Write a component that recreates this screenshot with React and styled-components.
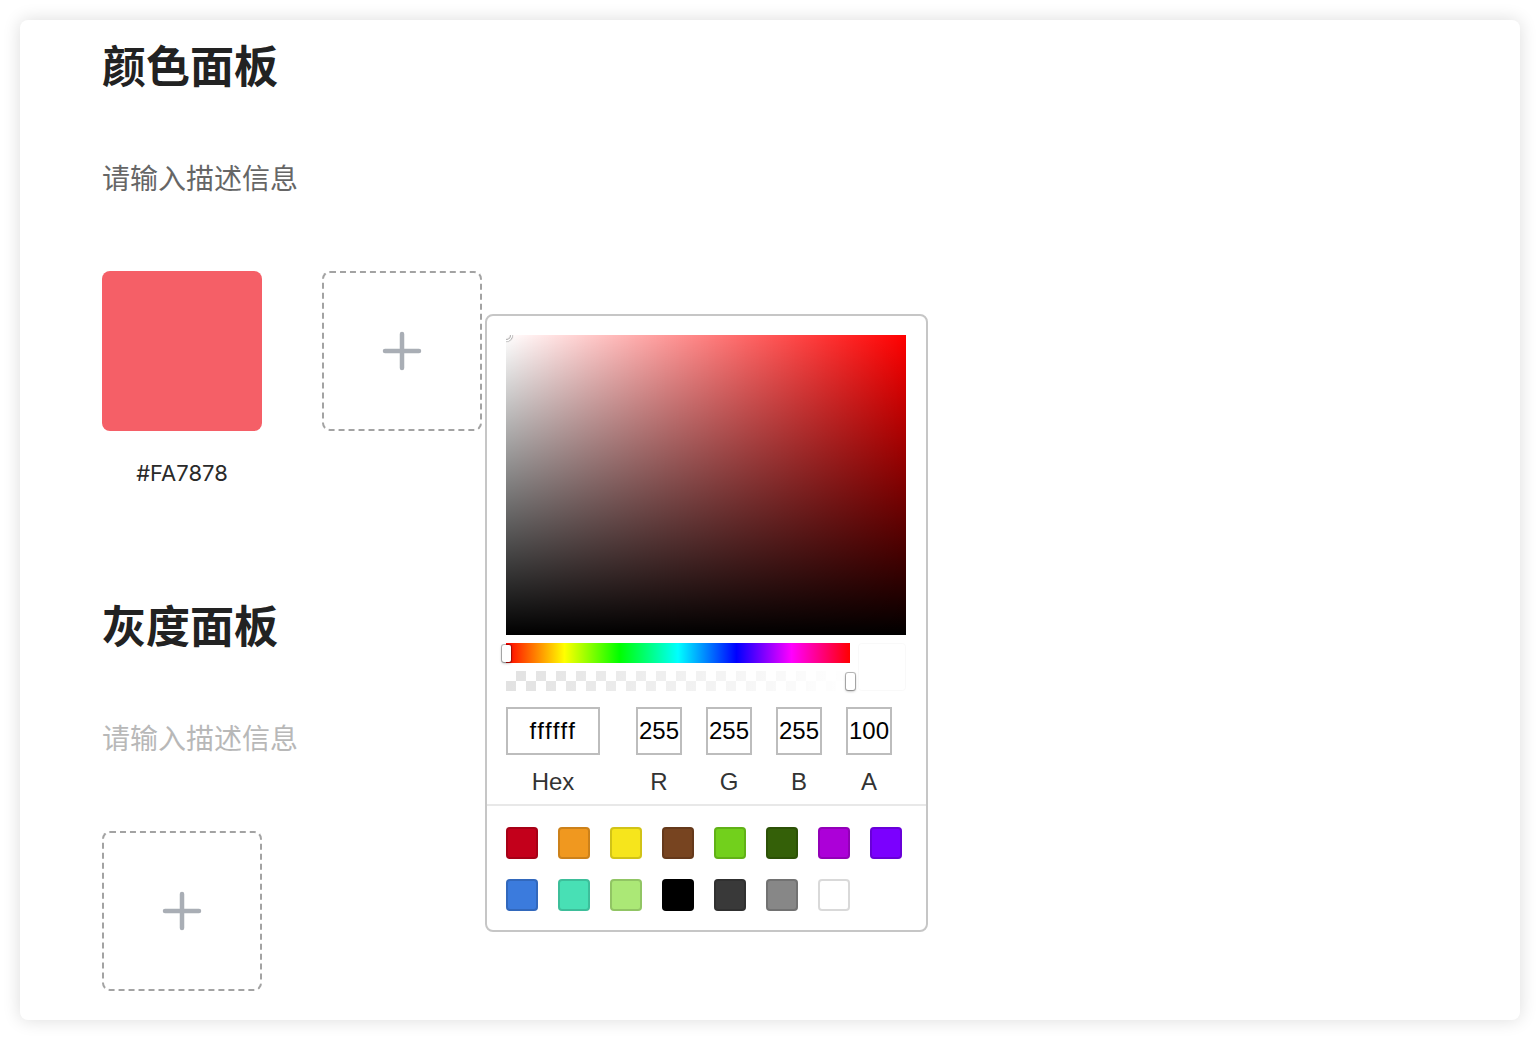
import React from 'react';
import styled, { createGlobalStyle } from 'styled-components';

const GlobalStyle = createGlobalStyle`
  body {
    margin: 0;
    padding: 20px;
    background: #fff;
    font-family: "Noto Sans CJK SC", "Noto Sans", sans-serif;
  }
  * { box-sizing: border-box; }
`;

const Card = styled.div`
  position: relative;
  height: 1000px;
  padding: 11px 80px 29px 82px;
  background: #fff;
  border-radius: 8px;
  box-shadow: 0 0 18px rgba(0, 0, 0, 0.14);
`;

const Section = styled.section`
  & + & {
    margin-top: 102px;
  }
`;

const Title = styled.h2`
  margin: 0;
  font-size: 44px;
  line-height: 66px;
  font-weight: 700;
  color: #222;
`;

const Desc = styled.p`
  margin: 59px 0 0;
  font-size: 28px;
  line-height: 42px;
  font-weight: 400;
  color: ${(p) => (p.$muted ? '#b8b8b8' : '#666')};
`;

const TileRow = styled.div`
  display: flex;
  gap: 60px;
  margin-top: 73px;
  align-items: flex-start;
`;

const SwatchItem = styled.div`
  display: flex;
  flex-direction: column;
  align-items: center;
  width: 160px;
`;

const Swatch = styled.div`
  width: 160px;
  height: 160px;
  border-radius: 8px;
  background: ${(p) => p.$color};
`;

const SwatchLabel = styled.div`
  margin-top: 26px;
  font-family: Inter, "Noto Sans", sans-serif;
  font-size: 22px;
  line-height: 32px;
  color: #2a2a2a;
`;

const AddTile = styled.div`
  position: relative;
  width: 160px;
  height: 160px;
  border: 2px dashed #a3a3a3;
  border-radius: 8px;
  display: flex;
  align-items: center;
  justify-content: center;
`;

const Popover = styled.div`
  position: absolute;
  left: calc(100% + 5px);
  top: 41px;
  z-index: 10;
  width: 443px;
  padding: 19px 20px 19px 19px;
  background: #fff;
  border: 2px solid #c6c6c6;
  border-radius: 8px;
  font-family: "Liberation Sans", Arial, sans-serif;
`;

const Saturation = styled.div`
  position: relative;
  width: 400px;
  height: 300px;
  overflow: hidden;
  background:
    linear-gradient(to top, #000, rgba(0, 0, 0, 0)),
    linear-gradient(to right, #fff, rgba(255, 255, 255, 0)),
    #ff0000;
`;

const SatPointer = styled.div`
  position: absolute;
  left: 0;
  top: 0;
  width: 10px;
  height: 10px;
  border-radius: 50%;
  transform: translate(-50%, -50%);
  box-shadow: 0 0 0 1.5px #fff, inset 0 0 1px 1px rgba(0, 0, 0, 0.3), 0 0 1px 2px rgba(0, 0, 0, 0.4);
`;

const SliderRow = styled.div`
  display: flex;
  gap: 8px;
  margin-top: 8px;
`;

const Sliders = styled.div`
  flex: 1;
  display: flex;
  flex-direction: column;
  gap: 8px;
`;

const Bar = styled.div`
  position: relative;
  height: 20px;
`;

const HueBar = styled(Bar)`
  background: linear-gradient(
    to right,
    #f00 0%,
    #ff0 17%,
    #0f0 33%,
    #0ff 50%,
    #00f 67%,
    #f0f 83%,
    #f00 100%
  );
`;

const AlphaBar = styled(Bar)`
  background:
    linear-gradient(to right, rgba(255, 255, 255, 0), #fff),
    repeating-conic-gradient(#e2e2e2 0% 25%, #fff 0% 50%) 0 0 / 20px 20px;
`;

const Thumb = styled.div`
  position: absolute;
  top: 2px;
  left: ${(p) => (p.$end ? 'calc(100% - 4px)' : '-4px')};
  width: 9px;
  height: 17px;
  border-radius: 2px;
  background: #fff;
  box-shadow: 0 0 0 1px rgba(0, 0, 0, 0.25), 0 1px 3px rgba(0, 0, 0, 0.4);
`;

const Preview = styled.div`
  width: 48px;
  height: 48px;
  border-radius: 4px;
  background: #fff;
  box-shadow: inset 0 0 0 1px rgba(0, 0, 0, 0.025);
`;

const Fields = styled.div`
  display: flex;
  gap: 24px;
  margin-top: 16px;
`;

const Field = styled.label`
  display: flex;
  flex-direction: column;
  align-items: center;
  width: ${(p) => p.$w}px;
  margin-right: ${(p) => (p.$wide ? 12 : 0)}px;
`;

const FieldInput = styled.input`
  width: 100%;
  height: 48px;
  padding: 0;
  border: 2px solid #bdbdbd;
  border-radius: 0;
  outline: none;
  background: #fff;
  text-align: center;
  font-family: "Liberation Sans", Arial, sans-serif;
  font-size: 24px;
  font-variant-ligatures: none;
  letter-spacing: ${(p) => (p.$spaced ? '1.5px' : '0')};
  color: #000;
`;

const FieldLabel = styled.span`
  margin-top: 14px;
  font-size: 24px;
  line-height: 26px;
  color: #333;
`;

const Divider = styled.div`
  height: 2px;
  margin: 9px -20px 0 -19px;
  background: #e8e8e8;
`;

const Presets = styled.div`
  display: grid;
  grid-template-columns: repeat(8, 32px);
  gap: 20px;
  margin-top: 21px;
`;

const Preset = styled.div`
  width: 32px;
  height: 32px;
  border-radius: 4px;
  background: ${(p) => p.$color};
  box-shadow: inset 0 0 0 2px rgba(0, 0, 0, 0.15);
`;

const PlusIcon = () => (
  <svg width="40" height="40" viewBox="0 0 40 40">
    <path d="M20 3v34M3 20h34" stroke="#a9aeb5" strokeWidth="4.5" strokeLinecap="round" fill="none" />
  </svg>
);

const presets = [
  '#c3001b', '#f0981f', '#f6e51c', '#774420', '#72d01c', '#346008', '#ac00d8', '#7b00fe',
  '#3b7bdd', '#48e0b5', '#abe876', '#000000', '#393939', '#878787', '#ffffff',
];

const fields = [
  { label: 'Hex', value: 'ffffff', w: 94, wide: true },
  { label: 'R', value: '255', w: 46 },
  { label: 'G', value: '255', w: 46 },
  { label: 'B', value: '255', w: 46 },
  { label: 'A', value: '100', w: 46 },
];

const ColorPicker = () => (
  <Popover>
    <Saturation>
      <SatPointer />
    </Saturation>
    <SliderRow>
      <Sliders>
        <HueBar>
          <Thumb />
        </HueBar>
        <AlphaBar>
          <Thumb $end />
        </AlphaBar>
      </Sliders>
      <Preview />
    </SliderRow>
    <Fields>
      {fields.map((f) => (
        <Field key={f.label} $w={f.w} $wide={f.wide}>
          <FieldInput readOnly value={f.value} $spaced={f.wide} />
          <FieldLabel>{f.label}</FieldLabel>
        </Field>
      ))}
    </Fields>
    <Divider />
    <Presets>
      {presets.map((c) => (
        <Preset key={c} $color={c} />
      ))}
    </Presets>
  </Popover>
);

const App = () => (
  <>
    <GlobalStyle />
    <Card>
      <Section>
        <Title>颜色面板</Title>
        <Desc>请输入描述信息</Desc>
        <TileRow>
          <SwatchItem>
            <Swatch $color="#f55f67" />
            <SwatchLabel>#FA7878</SwatchLabel>
          </SwatchItem>
          <AddTile>
            <PlusIcon />
            <ColorPicker />
          </AddTile>
        </TileRow>
      </Section>

      <Section>
        <Title>灰度面板</Title>
        <Desc $muted>请输入描述信息</Desc>
        <TileRow>
          <AddTile>
            <PlusIcon />
          </AddTile>
        </TileRow>
      </Section>
    </Card>
  </>
);

export default App;
